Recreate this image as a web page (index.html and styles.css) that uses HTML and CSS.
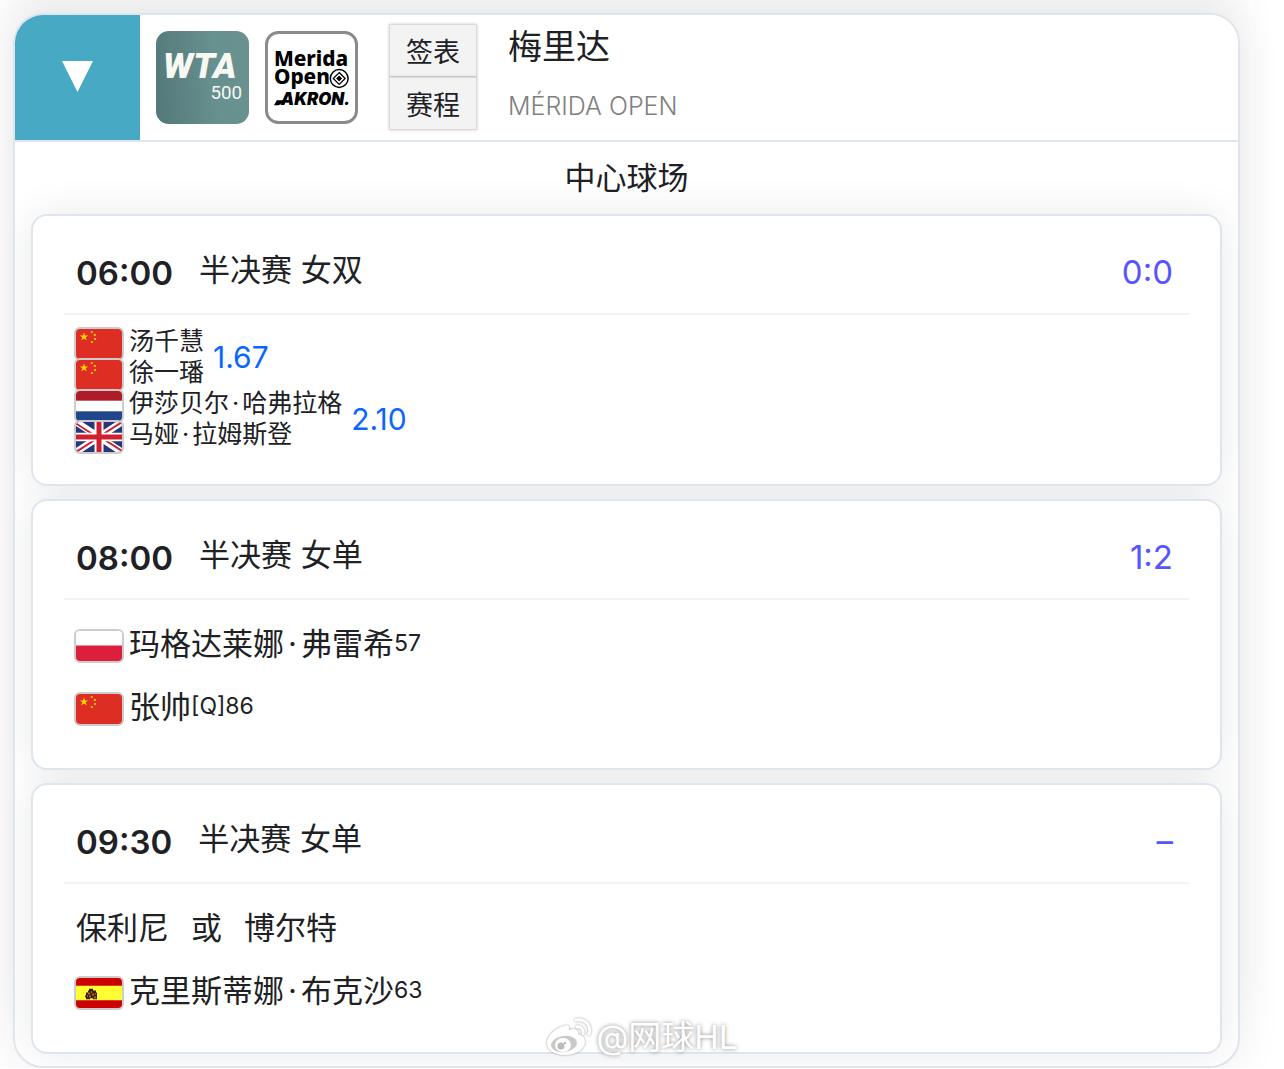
FILE: index.html
```html
<!DOCTYPE html>
<html lang="zh-CN">
<head>
<meta charset="utf-8">
<meta name="viewport" content="width=device-width, initial-scale=1">
<title>梅里达 赛程</title>
<link rel="stylesheet" href="styles.css">
</head>
<body>

<!-- flags, used by the player rows -->
<svg class="defs" width="0" height="0" aria-hidden="true">
<symbol id="flagCHN" viewBox="0 0 46 31" preserveAspectRatio="none">
<rect width="46" height="31" fill="#de2e24"/>
<path fill="#ffde00" d="M8 3.6l1 3h3.1l-2.5 1.9 1 3L8 9.7l-2.6 1.8 1-3L3.9 6.600H7z"/>
<path fill="#fccb0a" d="M15 2l2 .3-.4 1.900-1.900-.3zM18 5l2 .3-.4 1.900-1.900-.3zM18 9.500l2-.3.200 1.900-2 .2zM14.800 12.600l2-.3.200 1.900-2 .2z"/>
</symbol>
<symbol id="flagNED" viewBox="0 0 46 31" preserveAspectRatio="none">
<rect width="46" height="31" fill="#fff"/>
<rect width="46" height="10" fill="#ae1c28"/>
<rect y="21" width="46" height="10" fill="#21468b"/>
</symbol>
<symbol id="flagGBR" viewBox="0 0 46 31" preserveAspectRatio="none">
<rect width="46" height="31" fill="#283577"/>
<path d="M0 0L46 31M46 0L0 31" stroke="#fff" stroke-width="7"/>
<path d="M0 1.500L21 15.500M46 0L25 14M46 30L25 16M0 31L21 17" stroke="#d0202f" stroke-width="2"/>
<path d="M23 0V31M0 15.500H46" stroke="#fff" stroke-width="9"/>
<path d="M23 0V31M0 15.500H46" stroke="#cf2030" stroke-width="5"/>
</symbol>
<symbol id="flagPOL" viewBox="0 0 46 31" preserveAspectRatio="none">
<rect width="46" height="31" fill="#fff"/>
<rect y="15" width="46" height="16" fill="#dc1f3c"/>
</symbol>
<symbol id="flagESP" viewBox="0 0 46 31" preserveAspectRatio="none">
<rect width="46" height="31" fill="#c00"/>
<rect y="8" width="46" height="15" fill="#ff3"/>
<path fill="#3a1d10" d="M13 11h4v2h3v2h1v7h-4v-1h-3v1h-4v-2H9v-2h1v-3h2v-2h1z"/>
<path fill="#c4661c" d="M12 15h2v2h-2zM16 16h2v2h-2zM13 18h2v2h-2zM18 19h2v2h-2z"/>
<path fill="#e8b030" d="M11 18h1v1h-1zM15 14h1v1h-1zM19 16h1v1h-1z"/>
</symbol>
</svg>

<section class="tournament">
<header class="tour-head">
<button class="fold" type="button" aria-label="收起">
<svg width="31" height="31" viewBox="0 0 31 31"><path d="M0 0H31L15.500 31z" fill="#fff"/></svg>
</button>
<div class="logos">
<svg class="logo" viewBox="0 0 94 94" role="img" aria-label="WTA 500">
<defs>
<linearGradient id="wtaBg" x1="0" y1="0.550" x2="1" y2="0.450">
<stop offset="0" stop-color="#55797a"/>
<stop offset="0.650" stop-color="#67918f"/>
<stop offset="1" stop-color="#68918f"/>
</linearGradient>
</defs>
<rect width="94" height="94" rx="13" fill="url(#wtaBg)"/>
<text class="wta" x="7" y="47">WTA</text>
<text class="wta-level" x="55" y="69">500</text>
</svg>
<svg class="logo" viewBox="0 0 94 94" role="img" aria-label="Merida Open Akron">
<rect x="1.500" y="1.500" width="91" height="91" rx="12" fill="#fff" stroke="#8a8a8a" stroke-width="3"/>
<text class="merida" x="9" y="35">Merida</text>
<text class="merida" x="9" y="54">Open</text>
<g fill="none" stroke="#000">
<circle cx="75" cy="48" r="9" stroke-width="1.500"/>
<path d="M75 42l6 6-6 6-6-6z" stroke-width="1.300"/>
<path d="M75 45.500l2.500 2.500-2.500 2.500-2.500-2.500z" fill="#000"/>
</g>
<path d="M9 75h5l4-3h6v-2H12z"/>
<text class="akron" x="16" y="75">AKRON.</text>
</svg>
</div>
<div class="tabs">
<button type="button">签表</button>
<button type="button">赛程</button>
</div>
<div class="names">
<h1>梅里达</h1>
<p>MÉRIDA OPEN</p>
</div>
</header>

<h2 class="court">中心球场</h2>

<div class="matches">
<article class="match">
<div class="match-head">
<time>06:00</time>
<span class="round">半决赛 女双</span>
<span class="score">0:0</span>
</div>
<div class="players doubles">
<div class="team">
<div>
<div class="player"><svg class="flag"><use href="#flagCHN"/></svg>汤千慧</div>
<div class="player"><svg class="flag"><use href="#flagCHN"/></svg>徐一璠</div>
</div>
<span class="odds">1.67</span>
</div>
<div class="team">
<div>
<div class="player"><svg class="flag"><use href="#flagNED"/></svg>伊莎贝尔<span class="dot">·</span>哈弗拉格</div>
<div class="player"><svg class="flag"><use href="#flagGBR"/></svg>马娅<span class="dot">·</span>拉姆斯登</div>
</div>
<span class="odds">2.10</span>
</div>
</div>
</article>

<article class="match">
<div class="match-head">
<time>08:00</time>
<span class="round">半决赛 女单</span>
<span class="score">1:2</span>
</div>
<div class="players">
<div class="player"><svg class="flag"><use href="#flagPOL"/></svg>玛格达莱娜<span class="dot">·</span>弗雷希<span class="rank">57</span></div>
<div class="player"><svg class="flag"><use href="#flagCHN"/></svg>张帅<span class="rank">[Q]86</span></div>
</div>
</article>

<article class="match">
<div class="match-head">
<time>09:30</time>
<span class="round">半决赛 女单</span>
<span class="score">–</span>
</div>
<div class="players">
<div class="player either"><span>保利尼</span><span>或</span><span>博尔特</span></div>
<div class="player"><svg class="flag"><use href="#flagESP"/></svg>克里斯蒂娜<span class="dot">·</span>布克沙<span class="rank">63</span></div>
</div>
</article>
</div>

<div class="watermark">
<svg width="46" height="38" viewBox="0 0 46 38" aria-hidden="true">
<path fill="#fff" d="M18 8c3-2 6-1 5 4 5-2 10-1 9 4 4 1 7 3 7 8 0 7-9 13-20 13S1 32 1 25C1 18 9 10 18 8z"/>
<ellipse cx="18" cy="26" rx="13" ry="8" fill="#c9c9c9" transform="rotate(-8 18 26)"/>
<ellipse cx="17" cy="27" rx="8" ry="7" fill="#fff"/>
<circle cx="15" cy="28" r="3.500" fill="#bbb"/>
<circle cx="19" cy="25" r="1.300" fill="#bbb"/>
<path fill="none" stroke="#fff" stroke-width="3" stroke-linecap="round" d="M31 9c4-1 7 3 6 7M30 2c9-2 16 6 13 14"/>
</svg>
<span>@网球HL</span>
</div>
</section>

</body>
</html>
```
FILE: styles.css
```css
* {
	box-sizing: border-box;
}

body {
	margin: 0;
	padding: 13px 44px 0 13px;
	background: #fff;
	color: #202124;
	font-family: Inter, "Noto Sans CJK SC", sans-serif;
	overflow-x: hidden;
}

h1, h2, p {
	margin: 0;
	font-weight: 400;
}

.defs {
	position: absolute;
}

.tournament {
	position: relative;
	border: 2px solid #dfe5ed;
	border-radius: 30px;
	background: #fff;
	box-shadow: 0 0 44px rgba(40, 45, 60, .09), 0 -60px 40px rgba(60, 70, 60, .05);
	overflow: clip;
}

/* header */
.tour-head {
	display: flex;
	position: relative;
	z-index: 1;
	height: 127px;
	border-bottom: 2px solid #dfe5ed;
	background: #fff;
}

.fold {
	width: 125px;
	padding: 0;
	border: 0;
	background: #48a9c5;
}

.logos {
	display: flex;
	gap: 16px;
	padding: 16px 31px 0 16px;
}

.logo {
	width: 93px;
	height: 93px;
}

.wta {
	fill: #f8f8f2;
	font: italic 900 36px Roboto, sans-serif;
}

.wta-level {
	fill: #f8f8f2;
	font: 19px Roboto, sans-serif;
}

.merida {
	font: 800 21px "Noto Sans", sans-serif;
}

.akron {
	font: italic 900 17px Inter, sans-serif;
}

.tabs {
	display: flex;
	flex-direction: column;
	padding-top: 9px;
}

.tabs button {
	width: 88px;
	height: 53px;
	padding: 0;
	border: 1px solid #dadada;
	background: #f3f3f3;
	box-shadow: 0 0 3px rgba(0, 0, 0, .2);
	color: #202124;
	font: 27px/1 "Noto Sans CJK SC", sans-serif;
}

.names {
	padding: 7px 0 0 31px;
}

.names h1 {
	font-size: 34px;
	line-height: 50px;
}

.names p {
	color: #808080;
	font-size: 25px;
	font-weight: 300;
	line-height: 68px;
}

.court {
	height: 72px;
	font-size: 31px;
	line-height: 72px;
	text-align: center;
}

/* matches */
.matches {
	display: flex;
	flex-direction: column;
	gap: 13px;
	padding: 0 16px 12px;
	isolation: isolate;
}

.match {
	position: relative;
	padding: 0 31px;
	border: 2px solid #dfe5ed;
	border-radius: 16px;
	background: #fff;
}

/* shadow stays below the neighbouring cards */
.match::before {
	content: "";
	position: absolute;
	z-index: -1;
	inset: 0;
	border-radius: 16px;
	box-shadow: 0 0 40px rgba(40, 45, 60, .11);
}

.match-head {
	display: flex;
	align-items: center;
	height: 99px;
	padding: 6px 16px 0 12px;
	border-bottom: 2px solid #f3f3f5;
}

.match-head time {
	padding-top: 10px;
	font-size: 33px;
	font-weight: 600;
}

.round {
	margin-left: 26px;
	font-size: 31px;
}

.score {
	margin-left: auto;
	padding-top: 8px;
	color: #5555fa;
	font-size: 33px;
}

.players {
	padding: 12px 10px 30px;
	font-size: 31px;
}

.players.doubles {
	padding: 11px 10px 34px;
	font-size: 25px;
}

.player {
	display: flex;
	align-items: center;
	height: 63px;
	line-height: 1;
}

.doubles .player {
	height: 31px;
}

.dot {
	padding: 0 4px;
}

.doubles .dot {
	padding: 0 3px;
}

.either {
	gap: 22px;
	padding-left: 2px;
}

.flag {
	flex: none;
	width: 50px;
	height: 34px;
	margin: 4px 5px 0 0;
	border: 2px solid #ccc;
	border-radius: 6px;
}

.rank {
	font-size: 23px;
}

.team {
	display: flex;
	align-items: center;
}

.odds {
	margin-left: 9px;
	color: #0a66ff;
	font-size: 30px;
}

.watermark {
	position: absolute;
	z-index: 2;
	bottom: 4px;
	left: calc(50% + 15px);
	display: flex;
	align-items: center;
	gap: 5px;
	color: #fff;
	font-size: 33px;
	line-height: 50px;
	text-shadow: 0 0 4px #888;
	white-space: nowrap;
	transform: translateX(-50%);
}

.watermark svg {
	filter: drop-shadow(0 0 1px #999);
}
```
